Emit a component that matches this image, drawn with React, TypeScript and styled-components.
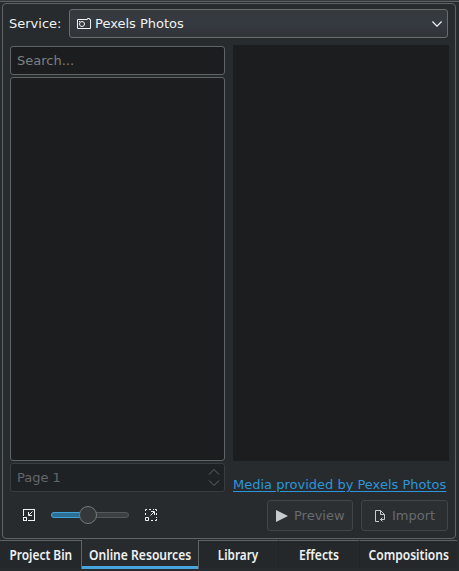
import React from 'react';
import styled, { createGlobalStyle } from 'styled-components';

const GlobalStyle = createGlobalStyle`
  * { box-sizing: border-box; }
  body { margin: 0; background: #272b2e; overflow: hidden; }
`;

const Dock = styled.div`
  width: 459px;
  height: 571px;
  display: flex;
  flex-direction: column;
  background: #272b2e;
  color: #eff1f2;
  font: 13px/16px "DejaVu Sans", sans-serif;
  white-space: nowrap;
`;

const TopEdge = styled.div`
  height: 3px;
  flex: none;
  background: linear-gradient(#34383c 1px, #5f6467 1px, #5f6467 2px, #24282b 2px);
`;

const Panel = styled.section`
  flex: none;
  width: 454px;
  height: 536px;
  margin-left: 2px;
  padding: 5px 6px 0 7px;
  border: 1px solid #5f6467;
  border-radius: 4px;
`;

const ServiceRow = styled.div`
  display: flex;
  align-items: center;
  height: 29px;
`;

const ServiceLabel = styled.label`
  flex: none;
  width: 60px;
  margin-left: -1px;
`;

const ServiceSelect = styled.div`
  display: flex;
  flex: none;
  align-items: center;
  width: 379px;
  height: 29px;
  padding: 0 5px 0 7px;
  border: 1px solid #686d70;
  border-radius: 3px;
  background: linear-gradient(#363a3d, #353a42 45%, #303438);
`;

const SelectValue = styled.span`
  flex: 1;
  margin-left: 4px;
`;

const Content = styled.div`
  display: grid;
  grid-template-columns: 215px 216px;
  column-gap: 8px;
  margin-top: 7px;
  height: 455px;
`;

const Column = styled.div`
  display: flex;
  flex-direction: column;
`;

const Field = styled.div<{ $muted?: boolean }>`
  display: flex;
  align-items: center;
  justify-content: space-between;
  flex: none;
  height: 29px;
  padding: 0 4px 0 6px;
  border: 1px solid ${(p) => (p.$muted ? '#393d40' : '#5f6467')};
  border-radius: 3px;
  background: ${(p) => (p.$muted ? '#1f2224' : '#1b1d1f')};
  color: ${(p) => (p.$muted ? '#63676a' : '#7c8082')};
`;

const SearchField = styled(Field)`
  margin-top: 1px;
`;

const Results = styled.div`
  height: 384px;
  margin: 2px 0;
  border: 1px solid #5f6467;
  border-radius: 3px;
  background: #1b1d1f;
`;

const Details = styled.div`
  height: 416px;
  background: #1b1d1f;
`;

const ProviderLink = styled.a`
  margin-top: 16px;
  color: #2d95d8;
  text-decoration: underline;
  text-underline-offset: 2px;
`;

const ZoomBar = styled.div`
  display: flex;
  align-items: center;
  height: 31px;
  margin-top: 7px;
  padding-left: 12px;
`;

const SliderTrack = styled.div`
  display: flex;
  align-items: center;
  width: 78px;
  height: 6px;
  margin: 0 15px;
  border: 1px solid #54585b;
  border-radius: 3px;
  background: #3c4043;
`;

const SliderFill = styled.div`
  flex: none;
  width: 36px;
  height: 6px;
  margin-left: -1px;
  border: 1px solid #3da3da;
  border-radius: 3px 0 0 3px;
  background: #2e6d94;
`;

const SliderHandle = styled.div`
  flex: none;
  width: 18px;
  height: 18px;
  margin-left: -8px;
  border: 1px solid #74797c;
  border-radius: 50%;
  background: #34383b;
`;

const Actions = styled.div`
  display: flex;
  gap: 8px;
  margin-top: 7px;
  padding-left: 34px;
`;

const ActionButton = styled.button<{ $width: number; $inset: number; $gap: number }>`
  display: flex;
  flex: none;
  align-items: center;
  gap: ${(p) => p.$gap}px;
  width: ${(p) => p.$width}px;
  height: 31px;
  padding: 0 0 0 ${(p) => p.$inset}px;
  border: 1px solid #414548;
  border-radius: 3px;
  background: #2b2f32;
  color: #676b6e;
  font: inherit;
`;

const TabBar = styled.nav`
  display: flex;
  flex: none;
  width: 457px;
  height: 31px;
  margin-top: 1px;
`;

const Tab = styled.div<{ $width: number; $selected?: boolean; $divider?: boolean }>`
  display: flex;
  flex: none;
  justify-content: center;
  align-items: center;
  width: ${(p) => p.$width}px;
  height: ${(p) => (p.$selected ? 29 : 28)}px;
  padding-top: ${(p) => (p.$selected ? 1 : 1)}px;
  border-top: ${(p) => (p.$selected ? 'none' : '1px solid #5f6467')};
  border-right: ${(p) => (p.$divider ? '1px solid #202427' : 'none')};
  ${(p) => p.$selected && 'border-left: 1px solid #5f6467; border-right: 1px solid #5f6467; box-shadow: inset 0 -3px #45a5dc;'}
  background: ${(p) => (p.$selected ? '#272b2e' : '#24282b')};
  font: 600 14px/18px "Noto Sans", sans-serif;
`;

const TabText = styled.span<{ $scale: number }>`
  transform: scaleX(${(p) => p.$scale});
`;

const tabs = [
  { label: 'Project Bin', width: 81, scale: 0.85 },
  { label: 'Online Resources', width: 118, scale: 0.865, selected: true },
  { label: 'Library', width: 80, scale: 0.84, divider: true },
  { label: 'Effects', width: 81, scale: 0.865, divider: true },
  { label: 'Compositions', width: 97, scale: 0.86 },
];

const CameraIcon = () => (
  <svg width="14" height="12" viewBox="0 0 14 12" fill="none" stroke="currentColor">
    <path d="M.5 1.500h10v-1h2v1h1v9H.5z" />
    <circle cx="5" cy="6" r="2.500" />
    <path d="M2 3.500h1" />
  </svg>
);

const ShrinkIcon = () => (
  <svg width="14" height="14" viewBox="0 0 14 14" fill="none" stroke="currentColor" shapeRendering="crispEdges">
    <path d="M1.5 8V1.5h11v11H6M1.5 9.5h3v3h-3z" />
    <path d="M6.5 4v3.5H10M7 7l3.5-3.5" shapeRendering="auto" />
  </svg>
);

const GrowIcon = () => (
  <svg width="14" height="14" viewBox="0 0 14 14" fill="none" stroke="currentColor">
    <path d="M1.5 3V1.5H3M5 1.5h2M9 1.5h1M11 1.5h1.500V3M12.500 5v2M12.500 9v1M12.500 11v1.500H11M9 12.500H7M1.500 7V5M1.500 9.500h3v3h-3z" />
    <path d="M7 3.500h3.500V7M10 4 6.500 7.500" />
  </svg>
);

const ImportIcon = () => (
  <svg width="12" height="14" viewBox="0 0 12 14" fill="none" stroke="#c8cbcd">
    <path d="M5 12.500H1.500v-11h5l4 4V8M6.500 1.500v4h4" />
    <path d="M10.500 8v2.500H6M8.500 8.500l-2 2 2 2" />
  </svg>
);

export default function App() {
  return (
    <>
      <GlobalStyle />
      <Dock>
        <TopEdge />
        <Panel>
          <ServiceRow>
            <ServiceLabel>Service:</ServiceLabel>
            <ServiceSelect>
              <CameraIcon />
              <SelectValue>Pexels Photos</SelectValue>
              <svg width="10" height="6" viewBox="0 0 10 6" fill="none" stroke="currentColor" strokeWidth="1.2">
                <path d="M.4.5 5 5.100 9.600.5" />
              </svg>
            </ServiceSelect>
          </ServiceRow>
          <Content>
            <Column>
              <SearchField>Search...</SearchField>
              <Results />
              <Field $muted>
                Page 1
                <svg width="12" height="19" viewBox="0 0 12 19" fill="none" stroke="currentColor">
                  <path d="M1 6.500 6 1.500l5 5M1 12.500l5 5 5-5" />
                </svg>
              </Field>
              <ZoomBar>
                <ShrinkIcon />
                <SliderTrack>
                  <SliderFill />
                  <SliderHandle />
                </SliderTrack>
                <GrowIcon />
              </ZoomBar>
            </Column>
            <Column>
              <Details />
              <ProviderLink>Media provided by Pexels Photos</ProviderLink>
              <Actions>
                <ActionButton $width={86} $inset={8} $gap={6}>
                  <svg width="12" height="12" viewBox="0 0 12 12" fill="#c8cbcd">
                    <path d="M0 0 12 6 0 12z" />
                  </svg>
                  Preview
                </ActionButton>
                <ActionButton $width={87} $inset={12} $gap={6}>
                  <ImportIcon />
                  Import
                </ActionButton>
              </Actions>
            </Column>
          </Content>
        </Panel>
        <TabBar>
          {tabs.map((t) => (
            <Tab key={t.label} $width={t.width} $selected={t.selected} $divider={t.divider}>
              <TabText $scale={t.scale}>{t.label}</TabText>
            </Tab>
          ))}
        </TabBar>
      </Dock>
    </>
  );
}
